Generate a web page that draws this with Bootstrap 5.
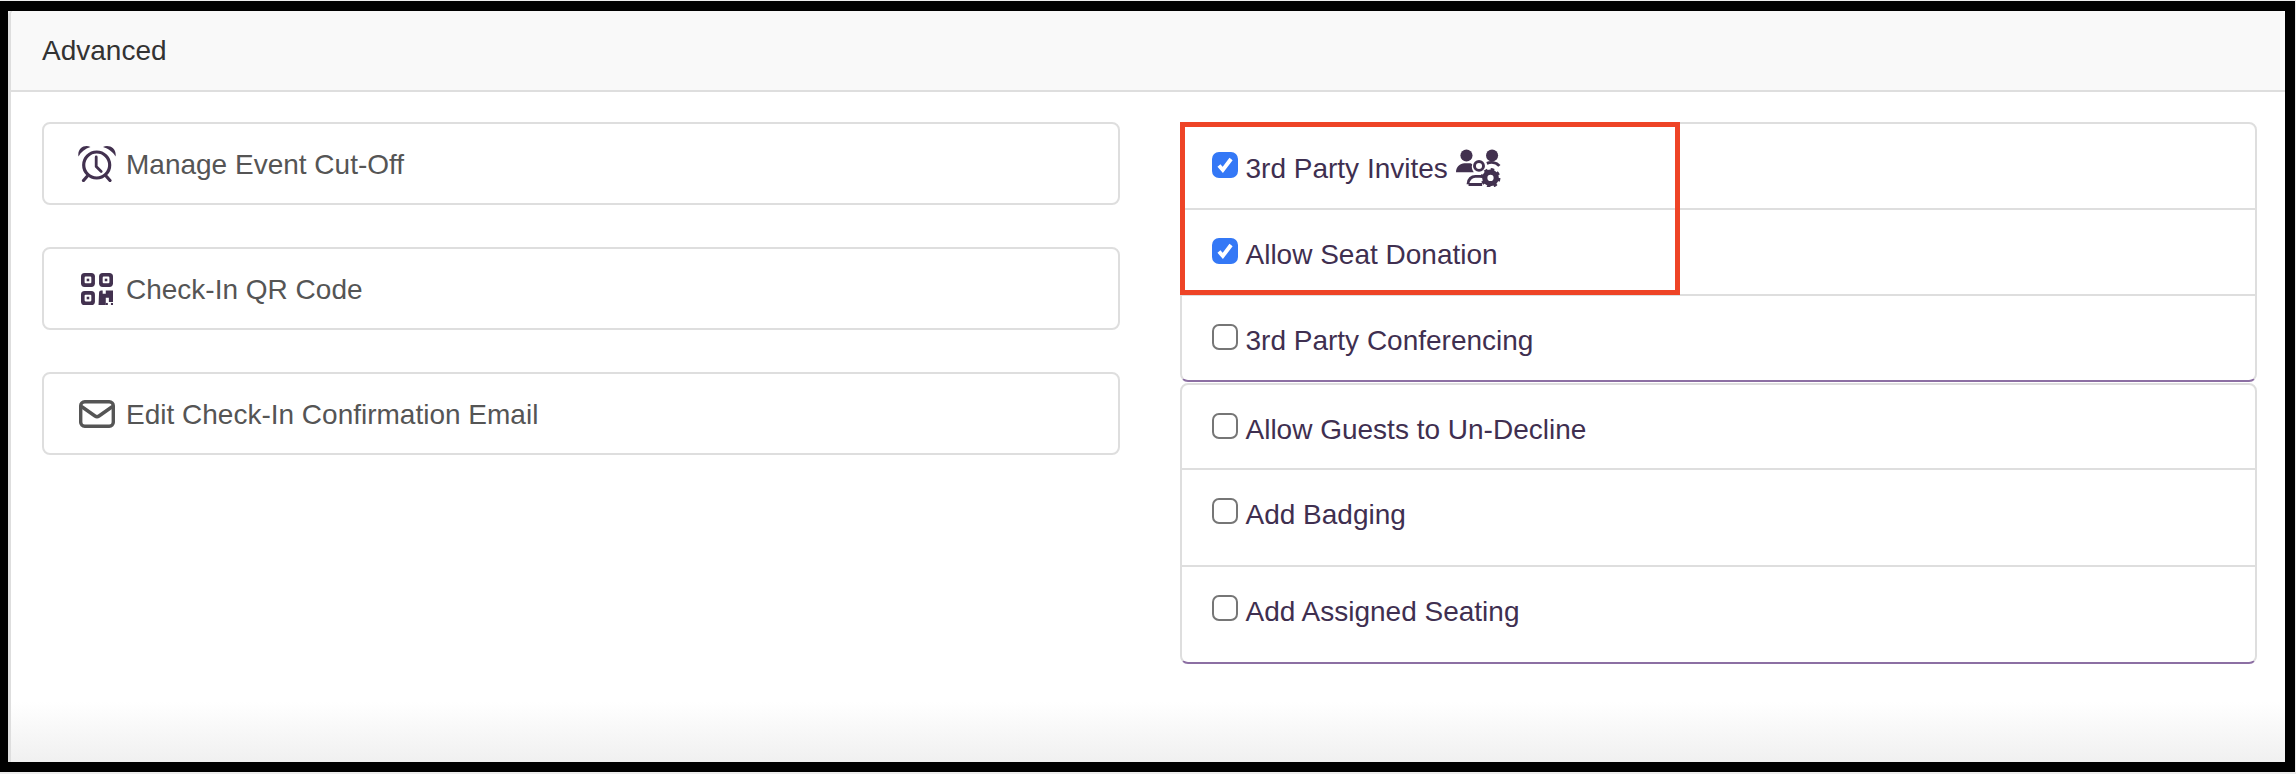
<!DOCTYPE html>
<html lang="en">
<head>
<meta charset="utf-8">
<title>Advanced</title>
<link href="https://cdn.jsdelivr.net/npm/bootstrap@5.3.0/dist/css/bootstrap.min.css" rel="stylesheet">
<style>
html,body{height:100%;}
body{background:#ececec;font-family:"Liberation Sans",Arial,sans-serif;font-size:28px;overflow:hidden;}
.shot-frame{height:771px;margin:1px 1px 0 0;border:solid #000;border-width:10px 10px 10px 8px;}
.adv-panel{height:100%;border-width:0 0 0 3px;border-color:#dedede;border-radius:5px 0 0 0;background:linear-gradient(to bottom,#fff 92%,#f0f0f0 100%);}
.adv-panel .card-header{height:81px;padding:0 0 0 31px;background:#f9f9f9;border-bottom:2px solid #dedede;color:#333;font-size:28px;}
.adv-panel .card-body{padding:30px 28px 0 31px;}
.adv-cols{--bs-gutter-x:60px;--bs-gutter-y:0;}
.act-card{height:83px;margin-bottom:42px;border:2px solid #dedede;border-radius:8px;color:#555;padding-left:34px;}
.act-txt{margin-top:2px;}
.act-ico{flex:none;width:38px;margin-right:10px;display:flex;justify-content:center;}
.opt-wrap{position:relative;}
.opt-group{--bs-list-group-border-color:#dedede;--bs-list-group-border-width:2px;--bs-list-group-border-radius:8px;--bs-list-group-item-padding-x:30px;--bs-list-group-item-padding-y:0;margin:0;}
.opt-group .list-group-item{display:flex;align-items:flex-start;padding-top:28px;color:#3f2f50;}
.opt-group .list-group-item:last-child{border-bottom:2px solid #8c6fa3;}
.opt-group + .opt-group{margin-top:1px;}
.h-a{height:88px;}.h-d{height:87px;}.h-b{height:86px;}.h-c{height:97px;}
.opt-box{flex:none;width:26px;height:26px;margin:0 8px 0 0;border:2px solid #767676;border-radius:4px;background-color:#fff;}
.opt-box.form-check-input:checked{background-color:#3478f6;border-color:#3478f6;background-image:url("data:image/svg+xml,%3csvg xmlns='http://www.w3.org/2000/svg' viewBox='0 0 20 20'%3e%3cpath fill='none' stroke='%23fff' stroke-width='3.600' d='M4.500 10.500l3.500 4 7.500-10'/%3e%3c/svg%3e");}
.opt-label{line-height:30px;margin-top:2px;}
.grp-ico{margin-top:-3px;}
.flag-box{position:absolute;left:0;top:0;width:500px;height:173px;border:5px solid #ee4426;pointer-events:none;}
</style>
</head>
<body>
<div class="shot-frame">
  <div class="card adv-panel">
    <div class="card-header d-flex align-items-center">Advanced</div>
    <div class="card-body">
      <div class="row adv-cols">
        <div class="col-6">
          <div class="card act-card flex-row align-items-center">
            <span class="act-ico">
              <svg width="38" height="36" viewBox="0 0 38 36" fill="none"><circle cx="18.700" cy="19" r="13" stroke="#42314f" stroke-width="3.200"/><path d="M18.200 11v9.500l5 5" stroke="#42314f" stroke-width="2.800" stroke-linecap="round" stroke-linejoin="round"/><path d="M.5 10.500C-1 3 6-2 12.500 1 7 2.500 3 6 .5 10.500zM37.500 10.500C39 3 31.500-2 25 1 30.500 2.500 35 6 37.500 10.500z" fill="#42314f"/><path d="M9 30.500l-3.500 4M28.500 30.500l3.500 4" stroke="#42314f" stroke-width="3.200" stroke-linecap="round"/></svg>
            </span>
            <span class="act-txt">Manage Event Cut-Off</span>
          </div>
          <div class="card act-card flex-row align-items-center">
            <span class="act-ico">
              <svg width="32" height="32" viewBox="0 0 31 31"><g fill="#42314f"><rect width="13.500" height="13.500" rx="3.500"/><rect x="17.500" width="13.500" height="13.500" rx="3.500"/><rect y="17.500" width="13.500" height="13.500" rx="3.500"/><path d="M17.500 19a2 2 0 0 1 2-2h1.500v3h3v-3h7v11h-4v-4h-3v7h-7z"/><rect x="24" y="29" width="2" height="2"/><rect x="29" y="29" width="2" height="2"/></g><g fill="#fff"><rect x="3.500" y="3.500" width="6.500" height="6.500" rx="1"/><rect x="21" y="3.500" width="6.500" height="6.500" rx="1"/><rect x="3.500" y="21" width="6.500" height="6.500" rx="1"/></g><g fill="#42314f"><rect x="5.500" y="5.500" width="2.500" height="2.500"/><rect x="23" y="5.500" width="2.500" height="2.500"/><rect x="5.500" y="23" width="2.500" height="2.500"/></g></svg>
            </span>
            <span class="act-txt">Check-In QR Code</span>
          </div>
          <div class="card act-card flex-row align-items-center">
            <span class="act-ico">
              <svg width="36" height="28" viewBox="0 0 36 28" fill="none" stroke="#555" stroke-width="3.400"><rect x="1.700" y="1.700" width="32.600" height="24.600" rx="4"/><path d="M2.500 6.500l13.500 9.500a3.500 3.500 0 0 0 4 0l13.500-9.500" stroke-linejoin="round"/></svg>
            </span>
            <span class="act-txt">Edit Check-In Confirmation Email</span>
          </div>
        </div>
        <div class="col-6">
          <div class="opt-wrap">
            <ul class="list-group opt-group">
              <li class="list-group-item h-a"><input class="form-check-input opt-box" type="checkbox" checked aria-label="3rd Party Invites"><span class="opt-label">3rd Party Invites</span>
                <svg class="ms-2 grp-ico" width="46" height="38" viewBox="0 0 44 36" fill="none"><g fill="#42314f"><circle cx="10" cy="6" r="5.800"/><circle cx="34.500" cy="6" r="5.800"/><path d="M0 22c0-5 4-8.500 8-8.500h5c1 0 2 .5 2.500 1-1 3 0 5.500 1.500 7.500z"/></g><g stroke="#42314f" stroke-width="2.800"><circle cx="22" cy="16" r="4.300"/><path d="M11.500 33.500c0-5 3.500-7.500 7-7.500h7M12 33.700h13"/><path d="M29.500 13.500c4-1.500 9-1 12 2.500"/></g><circle cx="33" cy="27.500" r="5.500" stroke="#42314f" stroke-width="5"/><circle cx="33" cy="27.500" r="8" stroke="#42314f" stroke-width="3" stroke-dasharray="3.200 3.080"/></svg>
              </li>
              <li class="list-group-item h-b"><input class="form-check-input opt-box" type="checkbox" checked aria-label="Allow Seat Donation"><span class="opt-label">Allow Seat Donation</span></li>
              <li class="list-group-item h-b"><input class="form-check-input opt-box" type="checkbox" aria-label="3rd Party Conferencing"><span class="opt-label">3rd Party Conferencing</span></li>
            </ul>
            <ul class="list-group opt-group">
              <li class="list-group-item h-d"><input class="form-check-input opt-box" type="checkbox" aria-label="Allow Guests to Un-Decline"><span class="opt-label">Allow Guests to Un-Decline</span></li>
              <li class="list-group-item h-c"><input class="form-check-input opt-box" type="checkbox" aria-label="Add Badging"><span class="opt-label">Add Badging</span></li>
              <li class="list-group-item h-c"><input class="form-check-input opt-box" type="checkbox" aria-label="Add Assigned Seating"><span class="opt-label">Add Assigned Seating</span></li>
            </ul>
            <div class="flag-box"></div>
          </div>
        </div>
      </div>
    </div>
  </div>
</div>
<script src="https://cdn.jsdelivr.net/npm/bootstrap@5.3.0/dist/js/bootstrap.bundle.min.js"></script>
</body>
</html>
